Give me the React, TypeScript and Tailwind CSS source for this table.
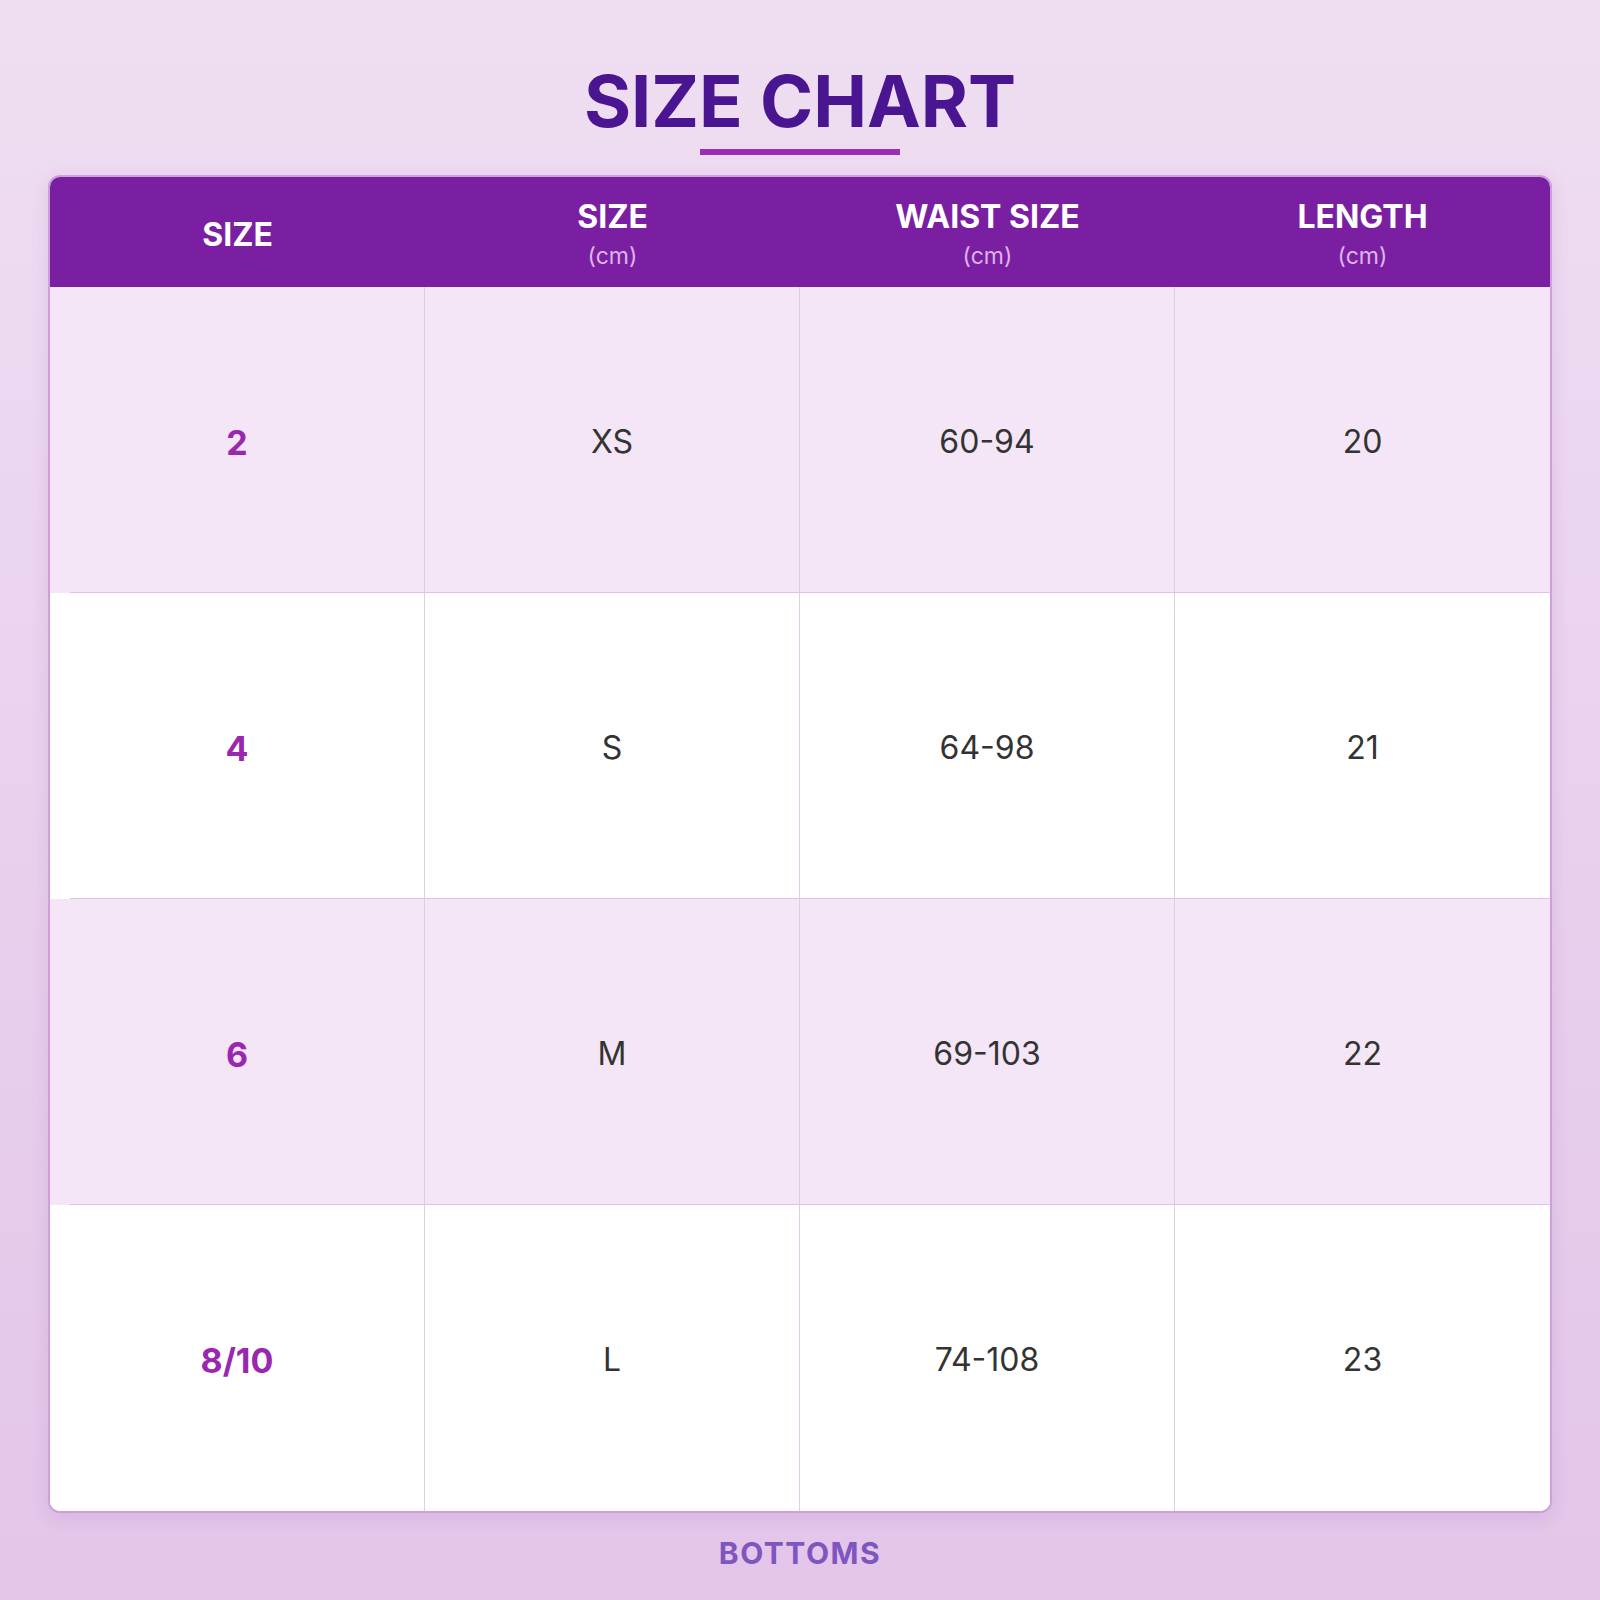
const COLS = [
  { label: "SIZE", unit: null },
  { label: "SIZE", unit: "(cm)" },
  { label: "WAIST SIZE", unit: "(cm)" },
  { label: "LENGTH", unit: "(cm)" },
];

const ROWS = [
  ["2", "XS", "60-94", "20"],
  ["4", "S", "64-98", "21"],
  ["6", "M", "69-103", "22"],
  ["8/10", "L", "74-108", "23"],
];

export default function App() {
  return (
    <div className="flex h-[1600px] w-full flex-col items-center bg-gradient-to-b from-[#efdef2] to-[#e3c5e9] px-12 pt-[65px] font-[Inter,sans-serif]">
      {/* ── Title ─────────────────────────────────── */}
      <h1 className="text-[72px] font-bold leading-none text-[#4a1590]">
        SIZE CHART
      </h1>
      <div className="mt-3 h-1.5 w-[200px] bg-[#9c2cb3]" />

      {/* ── Table ─────────────────────────────────── */}
      <div className="mt-5 w-full overflow-hidden rounded-xl border-2 border-[#cf9fdc] bg-white shadow-[0_4px_18px_rgba(120,40,150,0.12)]">
        <div className="grid h-[110px] grid-cols-4 bg-[#7b1fa2]">
          {COLS.map((c, i) => (
            <div key={i} className="flex flex-col items-center justify-center pt-[5px]">
              <span className="text-[32px] font-bold leading-9 text-white">{c.label}</span>
              {c.unit && (
                <span className="mt-[7px] text-[23px] leading-7 text-[#dcb3ea]">{c.unit}</span>
              )}
            </div>
          ))}
        </div>

        {ROWS.map((row, r) => (
          <div
            key={r}
            className={
              "relative grid h-[306px] grid-cols-4 " +
              (r % 2 === 0 ? "bg-[#f4e6f6]" : "bg-white")
            }
          >
            {row.map((cell, i) => (
              <div
                key={i}
                className={
                  "flex items-center justify-center pt-1 " +
                  (i < 3 ? "border-r-[1.5px] border-[#decde3] " : "") +
                  (i === 0
                    ? "text-[34px] font-bold text-[#9a27b0]"
                    : "text-[32px] text-[#333333]")
                }
              >
                {cell}
              </div>
            ))}
            {r < ROWS.length - 1 && (
              <div className="absolute bottom-0 left-5 right-0 h-px bg-[#e6bdea]" />
            )}
          </div>
        ))}
      </div>

      <p className="mt-[25px] text-[30px] font-bold leading-none tracking-[1.5px] text-[#7f55bf]">
        BOTTOMS
      </p>
    </div>
  );
}
